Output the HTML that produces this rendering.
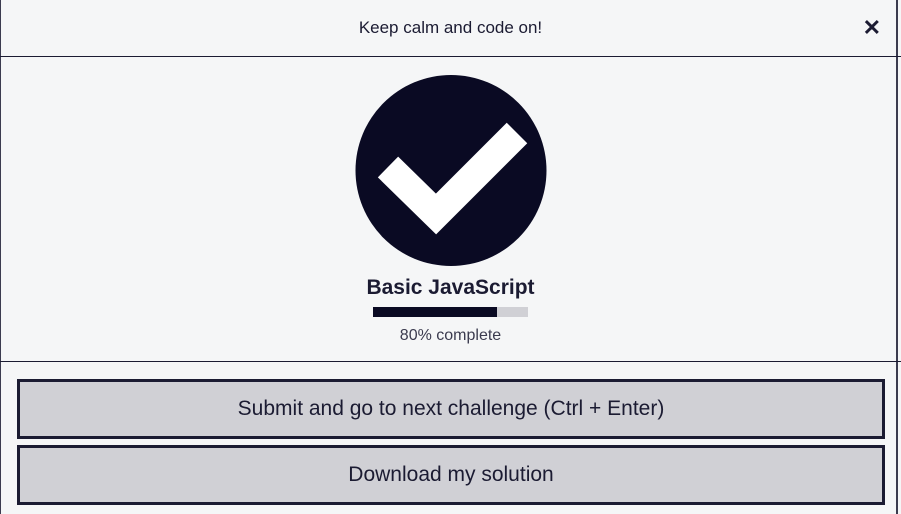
<!DOCTYPE html><html><head><style>
body{margin:0;width:901px;height:514px;overflow:hidden;background:#f5f6f7;font-family:"Liberation Sans",sans-serif;color:#1b1b32;position:relative}
.frame{position:absolute;left:0;top:0;width:898px;height:514px;border-left:1px solid #3b3b4f;border-right:2px solid #3b3b4f;box-sizing:border-box}
.hdr{position:absolute;top:0;left:0;width:901px;height:56px;border-bottom:1px solid #1b1b32;text-align:center;line-height:56px;font-size:17px}
.x{position:absolute;right:20px;top:0;font-size:22px;font-weight:bold}
.hr2{position:absolute;top:361px;left:0;width:901px;height:1px;background:#1b1b32}
.t{position:absolute;top:276px;width:901px;text-align:center;font-size:21px;font-weight:bold}
.bar{position:absolute;left:373px;top:307px;width:155px;height:10px;background:#d0d0d5}
.bar div{width:124px;height:10px;background:#0a0a23}
.p{position:absolute;top:327px;width:901px;text-align:center;font-size:16px;color:#3b3b4f}
.b{position:absolute;left:17px;width:868px;height:60px;box-sizing:border-box;border:3px solid #1b1b32;background:#d0d0d5;text-align:center;line-height:54px;font-size:21px}
</style></head><body>
<div class="frame"></div>
<div class="hdr">Keep calm and code on!<span class="x">✕</span></div>
<svg style="position:absolute;left:355px;top:75px" width="192" height="192"><circle cx="96" cy="95.5" r="95.5" fill="#0a0a23"/><path d="M33 92 L81 139 L162 58" stroke="#fff" stroke-width="29" fill="none" stroke-linejoin="miter" stroke-linecap="butt"/></svg>
<div class="t">Basic JavaScript</div>
<div class="bar"><div></div></div>
<div class="p">80% complete</div>
<div class="hr2"></div>
<div class="b" style="top:379px">Submit and go to next challenge (Ctrl + Enter)</div>
<div class="b" style="top:445px">Download my solution</div>
</body></html>
